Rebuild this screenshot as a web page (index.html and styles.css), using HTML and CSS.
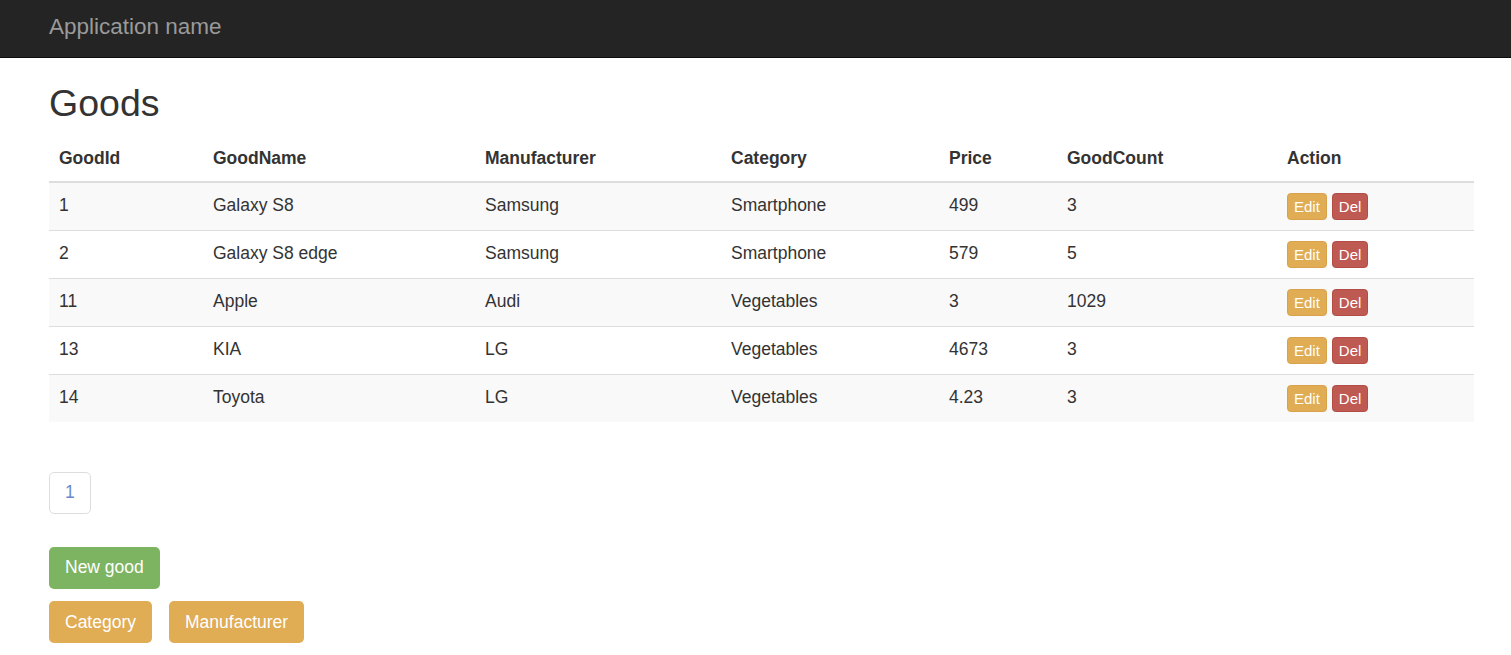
FILE: index.html
```html
<!DOCTYPE html>
<html lang="en">
<head>
<meta charset="utf-8">
<title>Goods</title>
<link rel="stylesheet" href="styles.css">
</head>
<body>
<nav class="navbar">
  <a class="brand" href="#">Application name</a>
</nav>
<main class="content">
  <h2 class="title">Goods</h2>
  <table class="goods">
    <thead>
      <tr>
        <th class="c-id">GoodId</th>
        <th class="c-name">GoodName</th>
        <th class="c-man">Manufacturer</th>
        <th class="c-cat">Category</th>
        <th class="c-price">Price</th>
        <th class="c-count">GoodCount</th>
        <th class="c-act">Action</th>
      </tr>
    </thead>
    <tbody>
      <tr>
        <td>1</td><td>Galaxy S8</td><td>Samsung</td><td>Smartphone</td><td>499</td><td>3</td>
        <td><div class="row-actions"><a class="btn-xs warn" href="#">Edit</a><a class="btn-xs danger" href="#">Del</a></div></td>
      </tr>
      <tr>
        <td>2</td><td>Galaxy S8 edge</td><td>Samsung</td><td>Smartphone</td><td>579</td><td>5</td>
        <td><div class="row-actions"><a class="btn-xs warn" href="#">Edit</a><a class="btn-xs danger" href="#">Del</a></div></td>
      </tr>
      <tr>
        <td>11</td><td>Apple</td><td>Audi</td><td>Vegetables</td><td>3</td><td>1029</td>
        <td><div class="row-actions"><a class="btn-xs warn" href="#">Edit</a><a class="btn-xs danger" href="#">Del</a></div></td>
      </tr>
      <tr>
        <td>13</td><td>KIA</td><td>LG</td><td>Vegetables</td><td>4673</td><td>3</td>
        <td><div class="row-actions"><a class="btn-xs warn" href="#">Edit</a><a class="btn-xs danger" href="#">Del</a></div></td>
      </tr>
      <tr>
        <td>14</td><td>Toyota</td><td>LG</td><td>Vegetables</td><td>4.23</td><td>3</td>
        <td><div class="row-actions"><a class="btn-xs warn" href="#">Edit</a><a class="btn-xs danger" href="#">Del</a></div></td>
      </tr>
    </tbody>
  </table>
  <div class="pager-wrap">
    <ul class="pagination"><li><a href="#">1</a></li></ul>
  </div>
  <p class="primary-actions"><a class="btn success" href="#">New good</a></p>
  <div class="ref-actions">
    <a class="btn warn" href="#">Category</a>
    <a class="btn warn" href="#">Manufacturer</a>
  </div>
</main>
</body>
</html>
```

FILE: styles.css
```css
* { box-sizing: border-box; }

html, body {
  margin: 0;
  padding: 0;
}

body {
  font-family: "Liberation Sans", Arial, Helvetica, sans-serif;
  font-size: 17.5px;
  line-height: 25px;
  color: #333;
  background: #fff;
}

a { text-decoration: none; }

.navbar {
  height: 58px;
  background: #242424;
  border-bottom: 1px solid #0c0c0c;
  display: flex;
  align-items: flex-start;
}

.brand {
  display: block;
  padding: 13.5px 0 0 49px;
  font-size: 22.5px;
  line-height: 25px;
  color: #9a9a9a;
}

.content {
  width: 1474px;
  padding-left: 49px;
}

.title {
  margin: 25px 0 11.5px;
  font-size: 37.5px;
  line-height: 1.1;
  font-weight: 500;
  color: #333;
}

.goods {
  width: 1425px;
  border-collapse: collapse;
  border-spacing: 0;
  margin-bottom: 0;
}

.goods th,
.goods td {
  padding: 10px;
  line-height: 25px;
  text-align: left;
  vertical-align: top;
}

.goods th {
  font-weight: bold;
  border-bottom: 2px solid #ddd;
}

.goods td {
  border-top: 1px solid #ddd;
}

.goods tbody tr:first-child td {
  border-top: 0;
}

.goods tbody tr:nth-child(odd) td {
  background: #f9f9f9;
}

.c-id { width: 154px; }
.c-name { width: 272px; }
.c-man { width: 246px; }
.c-cat { width: 218px; }
.c-price { width: 118px; }
.c-count { width: 220px; }
.c-act { width: 197px; }

.row-actions {
  display: flex;
  gap: 5px;
  height: 27px;
}

.btn-xs {
  display: inline-block;
  height: 27px;
  padding: 1px 6px;
  font-size: 15px;
  line-height: 23px;
  border: 1px solid transparent;
  border-radius: 3.75px;
  color: #fff;
}

.warn {
  background: #e0ac54;
  border-color: #d9a24a;
}

.danger {
  background: #be5a51;
  border-color: #b24d45;
}

.success {
  background: #7cb462;
  border-color: #70aa57;
}

.pager-wrap {
  margin: 50px 0 33px;
}

.pagination {
  display: flex;
  margin: 0;
  padding: 0;
  list-style: none;
}

.pagination a {
  display: block;
  padding: 7.5px 15px;
  line-height: 25px;
  color: #6d88cc;
  background: #fff;
  border: 1px solid #ddd;
  border-radius: 5px;
}

.primary-actions {
  margin: 0 0 12.5px;
  display: flex;
}

.btn {
  display: inline-block;
  padding: 7.5px 15px;
  font-size: 17.5px;
  line-height: 25px;
  border: 1px solid transparent;
  border-radius: 5px;
  color: #fff;
}

.ref-actions {
  display: flex;
  gap: 17px;
}
```
